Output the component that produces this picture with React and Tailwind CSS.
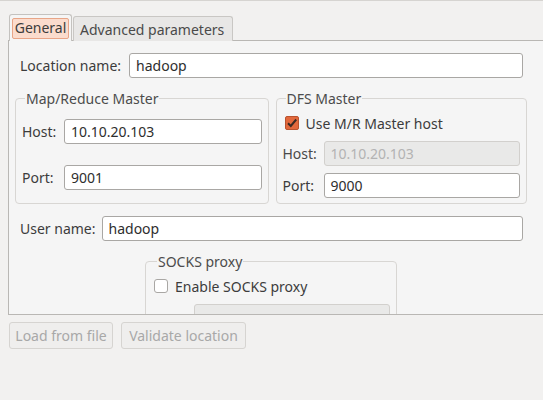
import React from 'react';

const font = { fontFamily: '"Noto Sans", "Open Sans", sans-serif' };

const Field = ({ value, disabled, className = '' }) => (
  <div
    className={`h-[25px] flex items-center px-[6px] rounded-[3px] border text-[14px] ${
      disabled
        ? 'bg-[#e9e9e8] border-[#d2d0cd] text-[#b3b3b3]'
        : 'bg-white border-[#a9a7a4] text-[#2e2e2e]'
    } ${className}`}
  >
    {value}
  </div>
);

const CheckBox = ({ checked }) =>
  checked ? (
    <div className="w-[14px] h-[14px] rounded-[2px] bg-[#e2683c] border border-[#b9532f] flex items-center justify-center">
      <svg width="12" height="12" viewBox="0 0 12 12">
        <path d="M2 6.2 L4.8 9 L10.2 2.5" fill="none" stroke="#3a2a24" strokeWidth="2" />
      </svg>
    </div>
  ) : (
    <div className="w-[14px] h-[14px] rounded-[3px] bg-white border border-[#a9a7a4]" />
  );

const App = () => {
  return (
    <div
      className="w-[543px] h-[400px] bg-[#f2f1f0] border-t border-[#d6d4d1] text-[14px] text-[#3c3c3c] overflow-hidden"
      style={font}
    >
      {/* tabs */}
      <div className="flex items-end pl-[9px] pt-[13px] relative z-10 -mb-px">
        <div className="h-[27px] w-[63px] bg-[#f5f5f5] border border-b-0 border-[#c4c2bf] rounded-t-[3px] flex items-center justify-center">
          <div className="h-[21px] px-[2px] bg-[#fbdccd] border border-[#e8a587] rounded-[2px] flex items-center leading-none">
            General
          </div>
        </div>
        <div className="ml-[1px] h-[25px] w-[160px] bg-[#e8e7e6] border border-b-0 border-[#c9c7c4] rounded-t-[3px] flex items-center pl-[6px] text-[#4a4a4a]">
          Advanced parameters
        </div>
      </div>

      {/* panel */}
      <div className="ml-[8px] h-[275px] bg-[#f5f5f5] border-t border-l border-b border-[#b9b7b4] overflow-hidden">
        <div className="flex items-center mt-[12px] pl-[11px] pr-[20px]">
          <span className="mr-[8px]">Location name:</span>
          <Field value="hadoop" className="flex-1" />
        </div>

        <div className="flex gap-[7px] pl-[6px] pr-[16px] mt-[10px]">
          <fieldset className="w-[254px] border border-[#d8d6d3] rounded-[4px] pl-[6px] pr-[6px] pb-[13px]">
            <legend className="ml-[3px] px-[1px] text-[#4c4c4c]">Map/Reduce Master</legend>
            <div className="flex items-center mt-[10px]">
              <span className="w-[42px]">Host:</span>
              <Field value="10.10.20.103" className="flex-1" />
            </div>
            <div className="flex items-center mt-[21px]">
              <span className="w-[42px]">Port:</span>
              <Field value="9001" className="flex-1" />
            </div>
          </fieldset>
          <fieldset className="w-[252px] border border-[#d8d6d3] rounded-[4px] pl-[6px] pr-[6px]">
            <legend className="ml-[3px] px-[1px] text-[#4c4c4c]">DFS Master</legend>
            <div className="flex items-center mt-[4px] pl-[2px] h-[20px]">
              <CheckBox checked />
              <span className="ml-[7px]">Use M/R Master host</span>
            </div>
            <div className="flex items-center mt-[8px]">
              <span className="w-[41px] text-[#4a4a4a]">Host:</span>
              <Field value="10.10.20.103" disabled className="flex-1" />
            </div>
            <div className="flex items-center mt-[7px]">
              <span className="w-[41px]">Port:</span>
              <Field value="9000" className="flex-1" />
            </div>
          </fieldset>
        </div>

        <div className="flex items-center mt-[12px] pl-[11px] pr-[20px]">
          <span className="mr-[6px]">User name:</span>
          <Field value="hadoop" className="flex-1" />
        </div>

        <fieldset className="ml-[136px] mt-[10px] w-[252px] border border-[#d8d6d3] rounded-[4px] pl-[8px] pr-[6px]">
          <legend className="ml-[3px] px-[1px] text-[#4c4c4c]">SOCKS proxy</legend>
          <div className="flex items-center mt-[4px] h-[20px]">
            <CheckBox />
            <span className="ml-[7px]">Enable SOCKS proxy</span>
          </div>
          <div className="flex items-center mt-[8px]">
            <span className="w-[40px]" />
            <Field value="" disabled className="flex-1" />
          </div>
        </fieldset>
      </div>

      {/* buttons */}
      <div className="flex gap-[8px] pl-[9px] mt-[7px]">
        <div className="w-[104px] h-[27px] flex items-center justify-center border border-[#d6d4d1] rounded-[3px] bg-[#efeeed] text-[#a8a8a8]">
          Load from file
        </div>
        <div className="w-[125px] h-[27px] flex items-center justify-center border border-[#d6d4d1] rounded-[3px] bg-[#efeeed] text-[#a8a8a8]">
          Validate location
        </div>
      </div>
    </div>
  );
};

export default App;
